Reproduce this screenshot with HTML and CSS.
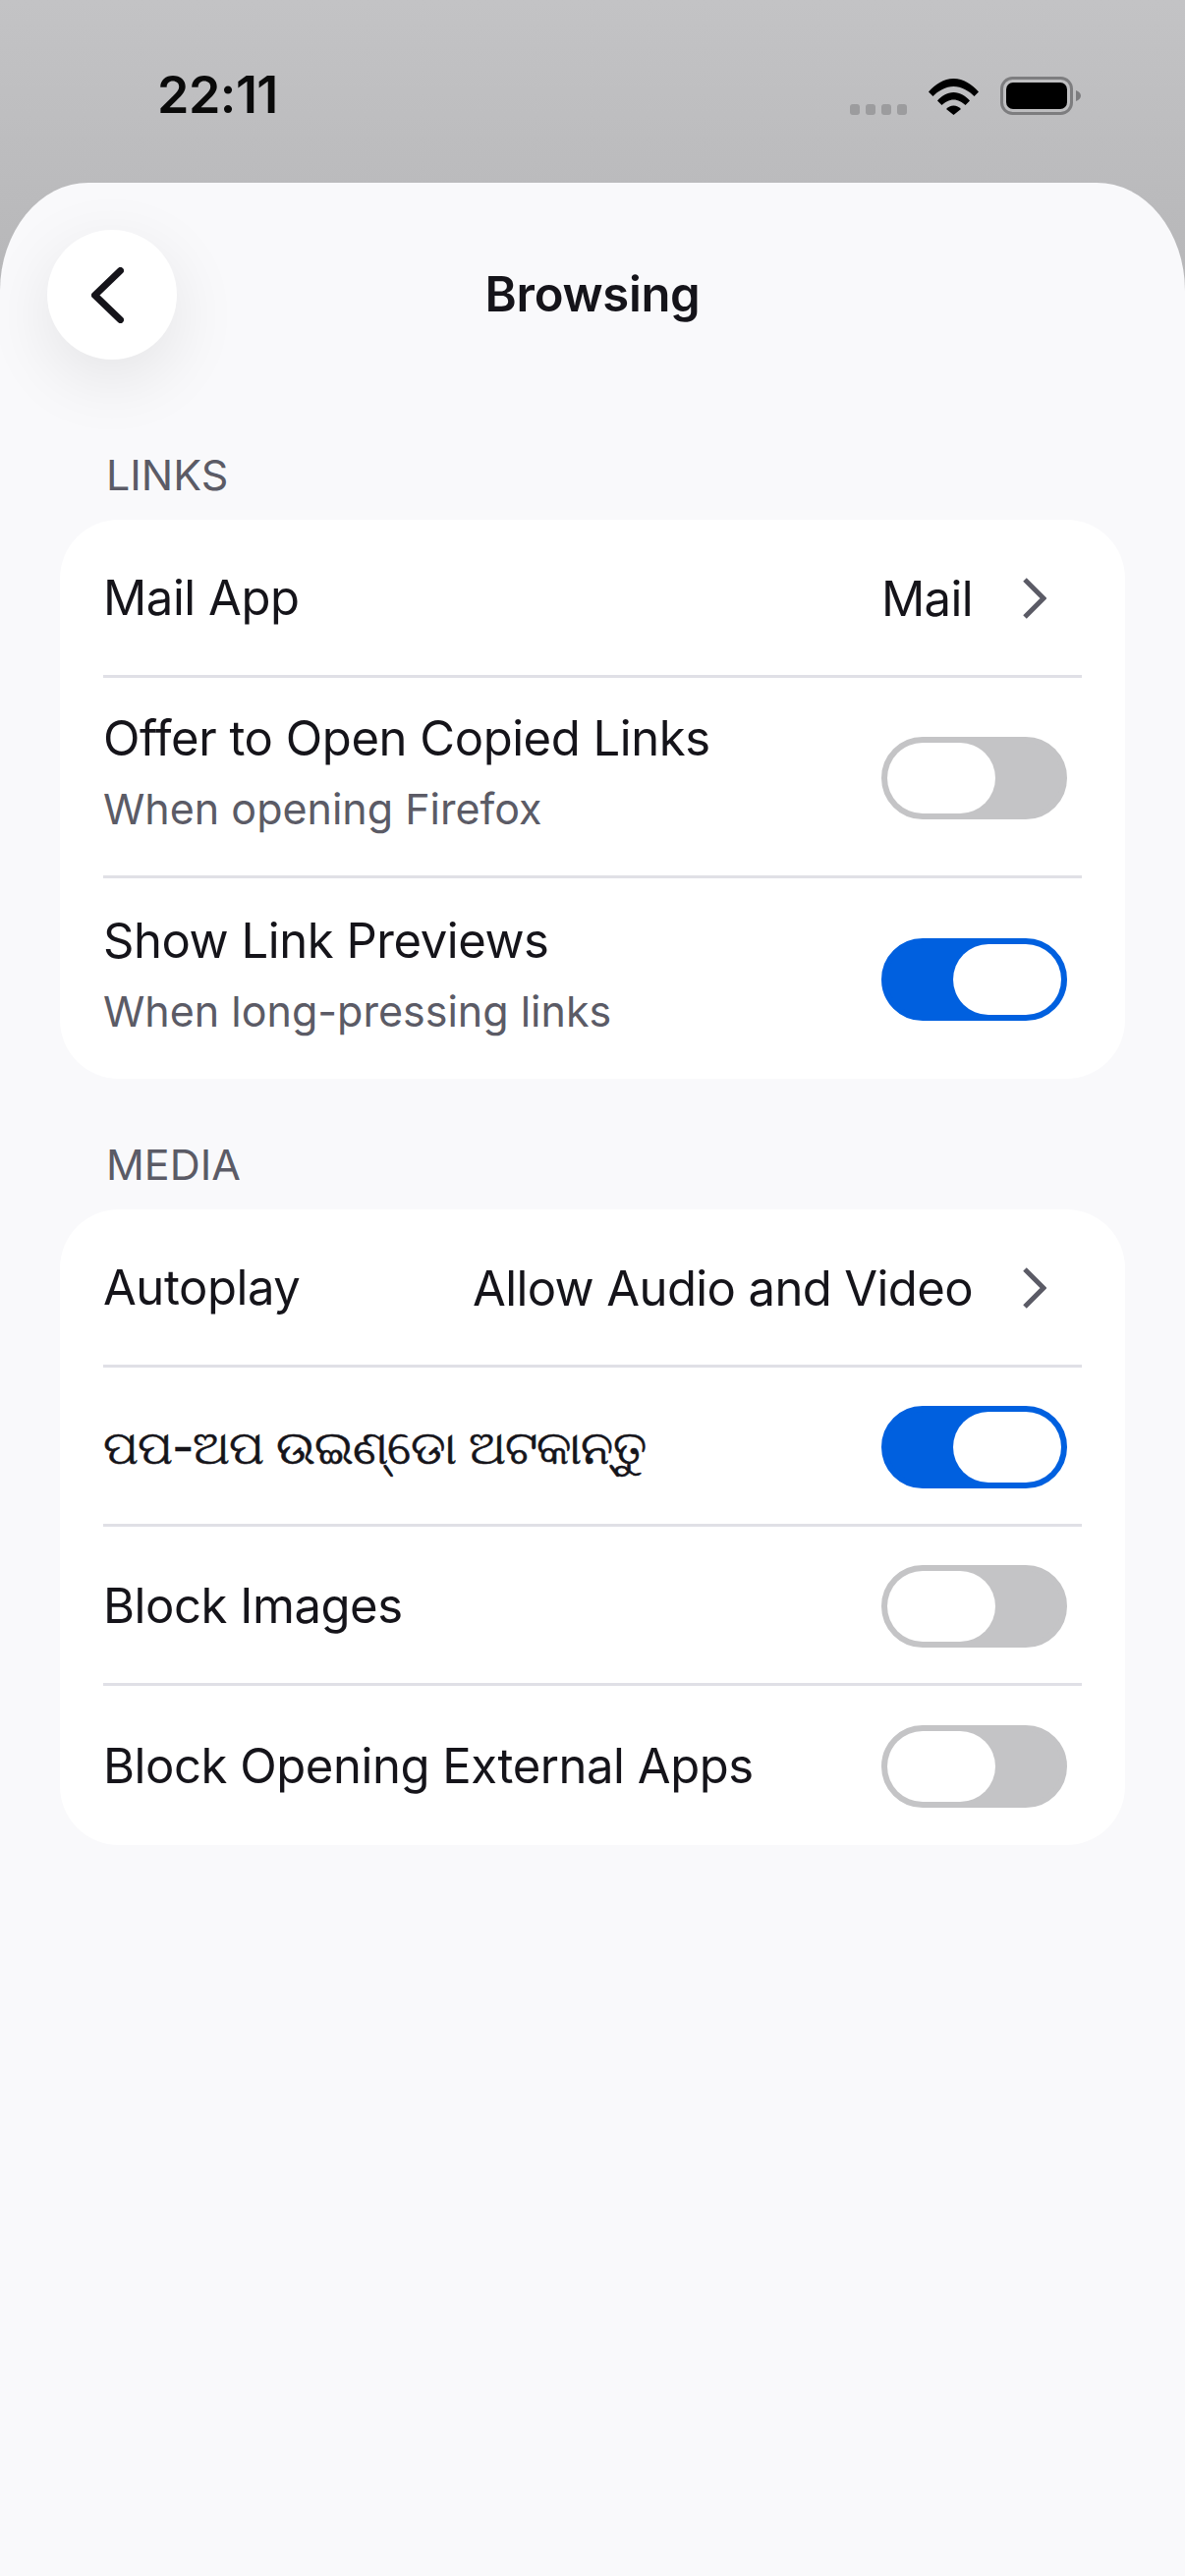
FILE: index.html
```html
<!DOCTYPE html>
<html lang="en">
<head>
    <meta charset="UTF-8">
    <meta name="viewport" content="width=device-width, initial-scale=1.0">
    <title>Browsing</title>
    <link rel="stylesheet" href="styles.css">
</head>
<body>
    <!-- Status bar -->
    <div class="status-bar">
        <span class="time">22:11</span>
        <div class="status-icons">
            <div class="signal"><i></i><i></i><i></i><i></i></div>
            <svg class="wifi" width="51" height="37" viewBox="0 0 51 37">
                <path d="M0 13.500C6.500 6 15.500 0 25.500 0S44.500 6 51 13.500L46.500 18C41 12.500 33.500 8 25.500 8S10 12.500 4.500 18Z"/>
                <path d="M9 22.500C13 18 19 14 25.500 14S38 18 42 22.500L37.500 27C34.500 24 30 21.500 25.500 21.500S16.500 24 13.500 27Z"/>
                <path d="M18 31C20 29 22.500 27.500 25.500 27.500S31 29 33 31L25.500 37Z"/>
            </svg>
            <svg class="battery" width="82" height="39" viewBox="0 0 82 39">
                <rect x="1.500" y="1.500" width="71" height="36" rx="11" fill="none" stroke="#7d7d7f" stroke-width="3"/>
                <rect x="6" y="6" width="62" height="27" rx="7" fill="#000"/>
                <path d="M77 14C80 15 82 17 82 19.500S80 24 77 25Z" fill="#7d7d7f"/>
            </svg>
        </div>
    </div>

    <div class="sheet">
        <div class="sheet-header">
            <button class="back-btn">
                <svg width="33" height="57" viewBox="0 0 33 57">
                    <path d="M29.500 3.500L3.500 28.500L29.500 53.500" fill="none" stroke="#15141a" stroke-width="7" stroke-linecap="round" stroke-linejoin="round"/>
                </svg>
            </button>
            <h1>Browsing</h1>
        </div>

        <!-- Links -->
        <h2 class="section-title">LINKS</h2>
        <div class="card">
            <div class="row row-nav">
                <span class="label">Mail App</span>
                <span class="value">Mail</span>
                <svg class="chevron" width="25" height="44" viewBox="0 0 25 44"><path d="M3 3L22 22L3 41" fill="none" stroke="#5b5b66" stroke-width="5"/></svg>
            </div>
            <div class="row row-tall">
                <div class="text">
                    <span class="label">Offer to Open Copied Links</span>
                    <span class="sub">When opening Firefox</span>
                </div>
                <div class="toggle"><span class="thumb"></span></div>
            </div>
            <div class="row row-tall">
                <div class="text">
                    <span class="label">Show Link Previews</span>
                    <span class="sub">When long-pressing links</span>
                </div>
                <div class="toggle on"><span class="thumb"></span></div>
            </div>
        </div>

        <!-- Media -->
        <h2 class="section-title">MEDIA</h2>
        <div class="card">
            <div class="row row-nav">
                <span class="label">Autoplay</span>
                <span class="value">Allow Audio and Video</span>
                <svg class="chevron" width="25" height="44" viewBox="0 0 25 44"><path d="M3 3L22 22L3 41" fill="none" stroke="#5b5b66" stroke-width="5"/></svg>
            </div>
            <div class="row">
                <span class="label label-odia" lang="or">ପପ-ଅପ ଉଇଣ୍ଡୋ ଅଟକାନ୍ତୁ</span>
                <div class="toggle on"><span class="thumb"></span></div>
            </div>
            <div class="row">
                <span class="label">Block Images</span>
                <div class="toggle"><span class="thumb"></span></div>
            </div>
            <div class="row">
                <span class="label">Block Opening External Apps</span>
                <div class="toggle"><span class="thumb"></span></div>
            </div>
        </div>
    </div>
</body>
</html>
```

FILE: styles.css
```css
/* Basic Reset */
* {
    box-sizing: border-box;
    margin: 0;
    padding: 0;
}

body {
    font-family: Inter, "Noto Sans", sans-serif;
    background: linear-gradient(#c3c3c5, #bbbbbd 186px, #b4b4b6 360px);
    color: #15141a;
    width: 1206px;
    height: 2622px;
    overflow: hidden;
    display: flex;
    flex-direction: column;
}

/* Status bar */
.status-bar {
    height: 186px;
    flex-shrink: 0;
    display: flex;
    justify-content: space-between;
    align-items: flex-start;
    padding: 0 106px 0 160px;
}

.time {
    font-size: 52px;
    font-weight: 600;
    line-height: 62px;
    margin-top: 66px;
    color: #0a0a0a;
    letter-spacing: -0.5px;
}

.status-icons {
    display: flex;
    align-items: flex-end;
    margin-top: 78px;
}

.signal {
    display: flex;
    gap: 6px;
    margin-right: 22px;
}

.signal i {
    width: 10px;
    height: 11px;
    border-radius: 3px;
    background-color: #9c9c9e;
}

.wifi {
    margin-right: 22px;
}

/* Sheet */
.sheet {
    flex: 1;
    background-color: #f9f9fb;
    border-radius: 90px 90px 0 0 / 110px 110px 0 0;
    padding: 48px 61px 0;
}

.sheet-header {
    position: relative;
    height: 132px;
    display: flex;
    align-items: center;
    justify-content: center;
    margin-bottom: 91px;
}

.sheet-header h1 {
    font-size: 49px;
    font-weight: 600;
    letter-spacing: -0.3px;
    margin-top: -2px;
}

.back-btn {
    position: absolute;
    left: -13px;
    top: 0;
    width: 132px;
    height: 132px;
    border: none;
    border-radius: 50%;
    background-color: #fff;
    box-shadow: 0 20px 70px rgba(0, 0, 0, 0.09);
    display: flex;
    align-items: center;
    padding-left: 45px;
}

.section-title {
    font-size: 43px;
    font-weight: 400;
    line-height: 52px;
    color: #5b5b66;
    padding-left: 47px;
    margin-bottom: 20px;
}

.card {
    background-color: #fff;
    border-radius: 60px;
    padding: 0 44px;
    margin-bottom: 61px;
}

.row {
    height: 162px;
    padding-top: 2px;
    display: flex;
    align-items: center;
    border-bottom: 3px solid #e0e0e6;
    font-size: 49px;
    letter-spacing: -0.45px;
}

.row:last-child {
    border-bottom: none;
}

.row-nav {
    height: 161px;
}

.row-tall {
    height: 204px;
}

.text {
    display: flex;
    flex-direction: column;
    padding-bottom: 12px;
}

.label {
    flex: 1;
    line-height: 60px;
}

.label-odia {
    font-size: 48px;
    letter-spacing: -0.9px;
    -webkit-text-stroke: 0.6px #15141a;
}

.text .sub {
    font-size: 43px;
    line-height: 52px;
    letter-spacing: 0;
    margin-top: 15px;
    color: #5b5b66;
}

.value {
    margin-right: 50px;
    letter-spacing: -0.6px;
}

.chevron {
    margin-right: 36px;
}

/* Toggle */
.toggle {
    margin-left: auto;
    margin-right: 15px;
    width: 189px;
    height: 84px;
    flex-shrink: 0;
    border: 6px solid #c4c4c6;
    border-radius: 42px;
    background-color: #c4c4c6;
    display: flex;
}

.toggle.on {
    border-color: #0060df;
    background-color: #0060df;
    justify-content: flex-end;
}

.thumb {
    width: 110px;
    height: 72px;
    border-radius: 36px;
    background-color: #fff;
}
```
